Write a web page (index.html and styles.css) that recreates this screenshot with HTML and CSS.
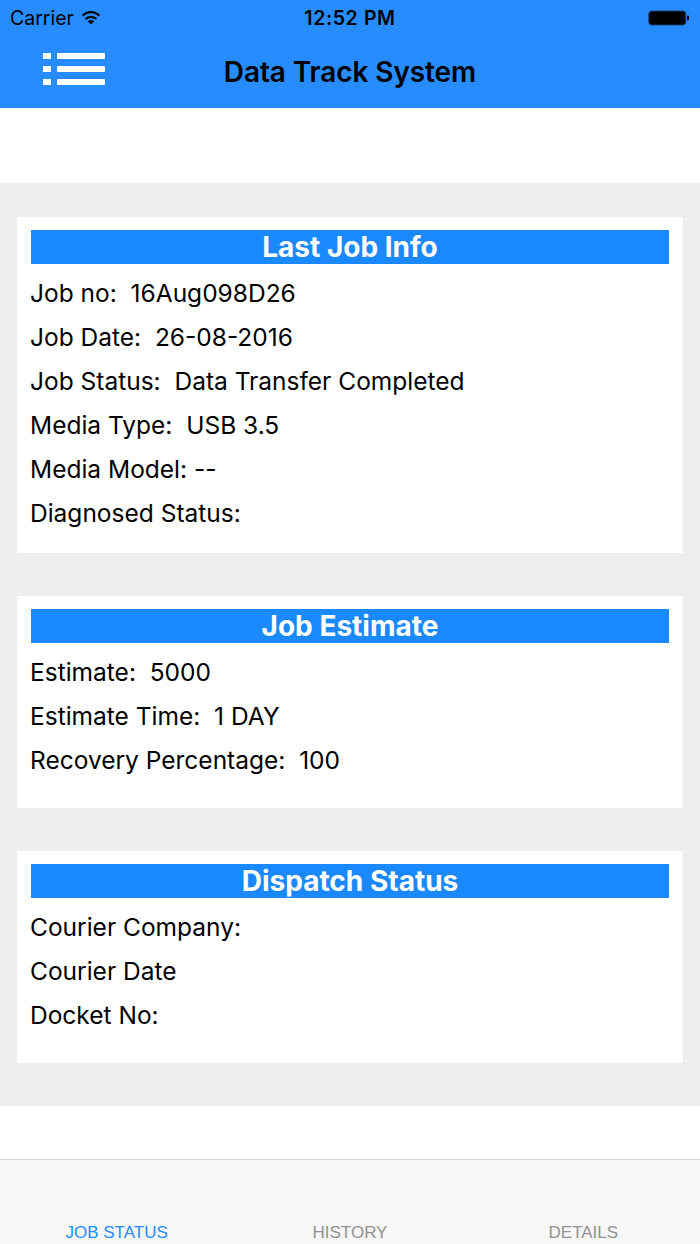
FILE: index.html
```html
<!DOCTYPE html>
<html>
<head>
<meta charset="utf-8">
<link rel="stylesheet" href="styles.css">
</head>
<body>
<div class="app">
  <header class="topbar">
    <div class="status">
      <div class="status-left">
        <span class="carrier">Carrier</span>
        <svg class="wifi" width="20" height="15" viewBox="0 0 20 15">
          <path d="M10 14.5 L6.8 11.2 A4.6 4.6 0 0 1 13.2 11.2 Z" fill="#000"/>
          <path d="M4.6 9 A7.7 7.7 0 0 1 15.4 9" stroke="#000" stroke-width="2.3" fill="none"/>
          <path d="M1.6 5.6 A11.8 11.8 0 0 1 18.4 5.6" stroke="#000" stroke-width="2.3" fill="none"/>
        </svg>
      </div>
      <span class="time">12:52 PM</span>
      <div class="status-right">
        <svg class="battery" width="42" height="16" viewBox="0 0 42 16">
          <rect x="0.8" y="1" width="37" height="14" rx="3" fill="#000" stroke="#1d3f73" stroke-width="1"/>
          <rect x="39" y="5.5" width="2" height="5" rx="1" fill="#000"/>
        </svg>
      </div>
    </div>
    <div class="nav">
      <svg class="menu" width="64" height="36" viewBox="0 0 64 36">
        <g fill="#fff">
          <rect x="0" y="2" width="8" height="6"/>
          <rect x="0" y="15" width="8" height="6"/>
          <rect x="0" y="28" width="8" height="6"/>
          <rect x="14" y="2" width="48" height="6" rx="1"/>
          <rect x="14" y="15" width="48" height="6" rx="1"/>
          <rect x="14" y="28" width="48" height="6" rx="1"/>
        </g>
      </svg>
      <h1 class="title">Data Track System</h1>
    </div>
  </header>

  <div class="spacer-top"></div>

  <main class="content">
    <section class="card card-first">
      <h2 class="card-head">Last Job Info</h2>
      <div class="row">Job no:&nbsp; 16Aug098D26</div>
      <div class="row">Job Date:&nbsp; 26-08-2016</div>
      <div class="row">Job Status:&nbsp; Data Transfer Completed</div>
      <div class="row">Media Type:&nbsp; USB 3.5</div>
      <div class="row">Media Model: --</div>
      <div class="row">Diagnosed Status:</div>
    </section>

    <section class="card">
      <h2 class="card-head">Job Estimate</h2>
      <div class="row">Estimate:&nbsp; 5000</div>
      <div class="row">Estimate Time:&nbsp; 1 DAY</div>
      <div class="row">Recovery Percentage:&nbsp; 100</div>
    </section>

    <section class="card">
      <h2 class="card-head">Dispatch Status</h2>
      <div class="row">Courier Company:</div>
      <div class="row">Courier Date</div>
      <div class="row">Docket No:</div>
    </section>
  </main>

  <div class="spacer-bottom"></div>

  <nav class="tabbar">
    <span class="tab active">JOB STATUS</span>
    <span class="tab">HISTORY</span>
    <span class="tab">DETAILS</span>
  </nav>
</div>
</body>
</html>
```

FILE: styles.css
```css
* { box-sizing: border-box; }

html, body {
  margin: 0;
  padding: 0;
  background: #ffffff;
}

body {
  font-family: Inter, "Liberation Sans", Arial, sans-serif;
  color: #000;
}

.app {
  width: 700px;
  height: 1244px;
  display: flex;
  flex-direction: column;
  overflow: hidden;
}

.topbar {
  background: #278cff;
  height: 108px;
  display: flex;
  flex-direction: column;
}

.status {
  height: 36px;
  display: grid;
  grid-template-columns: 1fr auto 1fr;
  align-items: center;
  padding: 0 10px 0 10px;
  font-size: 19.5px;
}

.status-left {
  display: flex;
  align-items: center;
  gap: 7px;
}

.carrier { font-weight: 400; }

.wifi { margin-top: -2px; }

.time {
  font-weight: 600;
  text-align: center;
  letter-spacing: 0.6px;
}

.status-right {
  display: flex;
  justify-content: flex-end;
}

.nav {
  flex: 1;
  display: flex;
  align-items: center;
  justify-content: center;
  position: relative;
}

.menu {
  position: absolute;
  left: 43px;
  top: 15px;
  filter: blur(0.7px);
}

.title {
  margin: 0;
  font-size: 28px;
  font-weight: 600;
  letter-spacing: -0.1px;
  padding-bottom: 1px;
}

.spacer-top {
  height: 75px;
  background: #fff;
}

.content {
  background: #eeeeee;
  padding: 34px 17px 43px;
  display: flex;
  flex-direction: column;
  gap: 43px;
}

.card {
  background: #fff;
  padding: 13px 14px 26px;
}

.card-first { padding-bottom: 18px; }

.card-head {
  margin: 0 0 7px;
  height: 34px;
  background: #1a88ff;
  color: #fff;
  font-size: 28px;
  font-weight: 700;
  text-align: center;
  line-height: 34px;
  letter-spacing: 0;
}

.row {
  height: 44px;
  line-height: 44px;
  font-size: 24.5px;
  margin-left: -1px;
  white-space: pre;
}

.spacer-bottom {
  height: 53px;
  background: #fff;
}

.tabbar {
  flex: 1;
  background: #f7f7f7;
  border-top: 1px solid #d6d6d6;
  display: grid;
  grid-template-columns: 1fr 1fr 1fr;
  align-items: end;
  padding-bottom: 1px;
}

.tab {
  text-align: center;
  font-family: "Liberation Sans", Arial, sans-serif;
  font-size: 17px;
  color: #929292;
  line-height: 20px;
}

.tab.active { color: #278cff; }
```
